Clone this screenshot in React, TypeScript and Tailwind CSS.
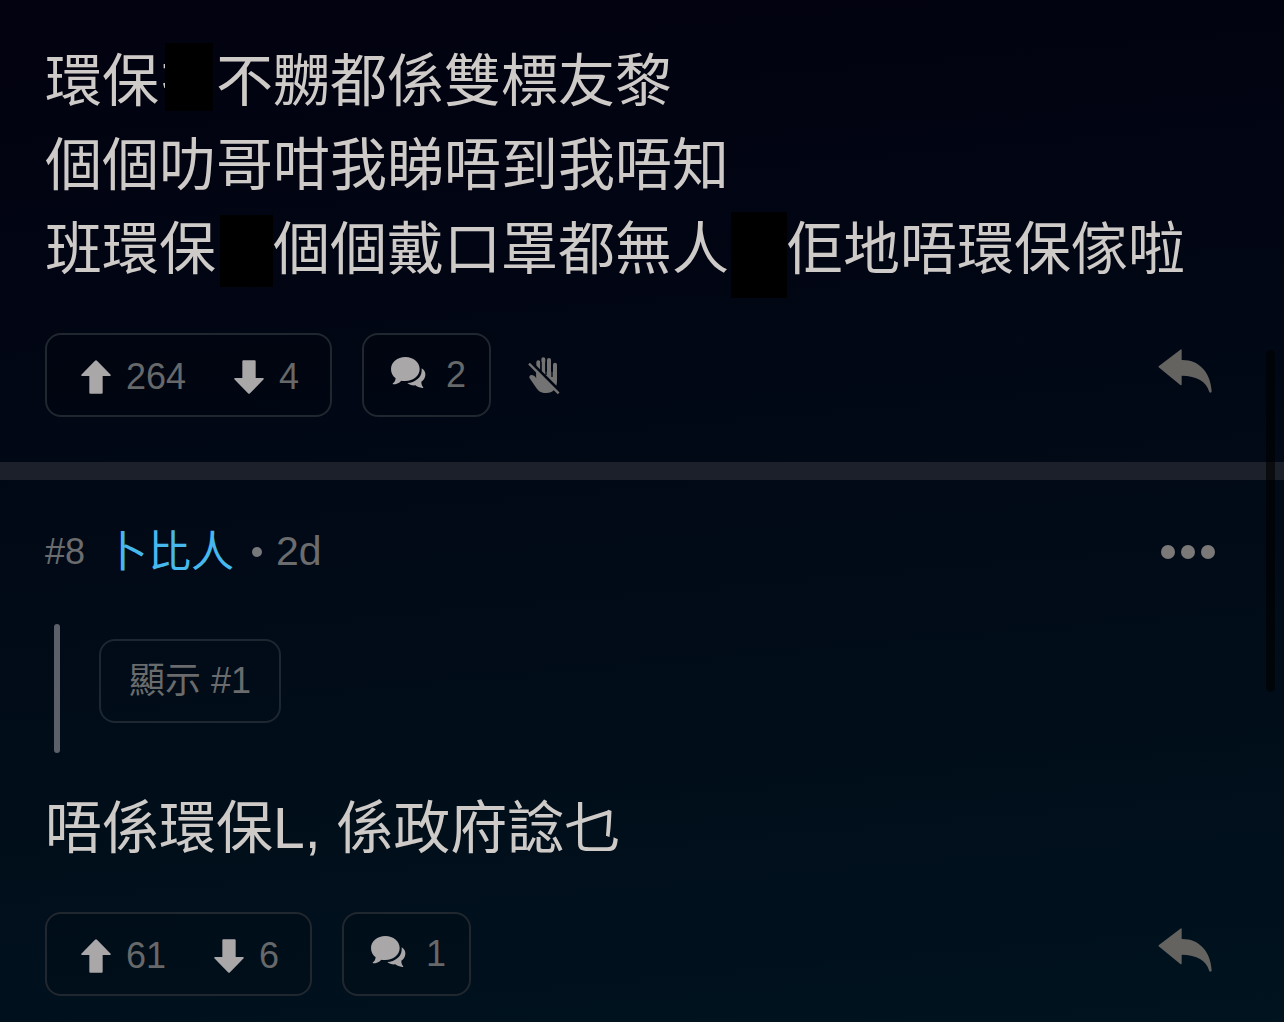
import type { ReactNode } from 'react';

interface PostActionsProps {
  likes: number;
  dislikes: number;
  replies: number;
  muted?: boolean;
}

function ArrowUpIcon() {
  return (
    <svg viewBox="0 0 90 102" className="w-[30px] h-[34px]" fill="#aaa7a9" aria-hidden="true">
      <path d="M42 2Q45-1 48 2L89 44Q91 48 86 48H65V98Q65 101 62 101H28Q25 101 25 98V48H4Q-1 48 1 44Z" />
    </svg>
  );
}

function ArrowDownIcon() {
  return (
    <svg viewBox="0 0 90 102" className="w-[30px] h-[34px]" fill="#aaa7a9" aria-hidden="true">
      <path d="M42 100Q45 103 48 100L89 58Q91 54 86 54H65V4Q65 1 62 1H28Q25 1 25 4V54H4Q-1 54 1 58Z" />
    </svg>
  );
}

function BubblesIcon() {
  return (
    <svg viewBox="0 0 108 114" className="w-9 h-[38px]" fill="#aaa7a9" aria-hidden="true">
      <path d="M46 3C70 3 89 19 89 39S70 75 46 75C41 75 38 75 34 74C27 82 18 85 10 85C8 85 7 83 9 82C14 78 16 74 17 67C8 60 3 50 3 39C3 19 22 3 46 3Z" />
      <path d="M95 37C104 43 107 50 106 58C105 67 101 73 94 77C94 85 96 89 99 93C101 95 99 97 97 96C89 95 81 93 76 88C66 89 58 86 52 81C75 80 94 65 95 45Z" />
    </svg>
  );
}

function HandOffIcon() {
  return (
    <svg viewBox="0 0 99 120" className="w-[33px] h-10" aria-hidden="true">
      <g fill="none" stroke="#747373" strokeWidth="12" strokeLinecap="round">
        <path d="M34 22V66M49 13V66M66 15V66M84 29V70" />
      </g>
      <path
        d="M28 50H90V78C90 100 78 114 58 114C42 114 34 108 28 99L8 70C5 65 9 59 15 60C21 61 24 64 28 70Z"
        fill="#747373"
      />
      <path d="M75 66V26M57 60V20M42 50V20" stroke="#010813" strokeWidth="4" fill="none" />
      <path d="M8 18L99 109" stroke="#010813" strokeWidth="9" />
      <path d="M6 26L95 115" stroke="#747373" strokeWidth="7" />
    </svg>
  );
}

function ReplyIcon() {
  return (
    <svg viewBox="0 0 162 132" className="w-[54px] h-11" fill="#64635f" aria-hidden="true">
      <path d="M2 55Q0 53 3 51L67 2Q71-1 71 4V33C125 32 158 72 161 127Q161 131 157 131Q153 131 153 127C146 99 116 80 71 80V105Q71 111 66 107Z" />
    </svg>
  );
}

function Redacted({ className }: { className: string }) {
  return (
    <span className="relative">
      扌
      <span className={`absolute bg-black ${className}`} />
    </span>
  );
}

function PostBody({ children }: { children: ReactNode }) {
  return <div className="text-[57px] leading-[84px] text-[#cecac7]">{children}</div>;
}

function PostActions({ likes, dislikes, replies, muted }: PostActionsProps) {
  return (
    <div className="mt-[42px] flex items-start gap-[30px] text-4xl text-[#67686a]">
      <div className="h-[84px] flex items-center gap-12 pl-[34px] pr-[31px] pt-[3px] rounded-2xl border-2 border-[#20272f] bg-black/10">
        <button className="flex items-center gap-[15px]" aria-label="正評">
          <ArrowUpIcon />
          {likes}
        </button>
        <button className="flex items-center gap-[15px]" aria-label="負評">
          <ArrowDownIcon />
          {dislikes}
        </button>
      </div>
      <button
        className="h-[84px] flex items-center gap-5 pl-[26px] pr-[23px] rounded-2xl border-2 border-[#20272f] bg-black/10"
        aria-label="回覆數目"
      >
        <BubblesIcon />
        {replies}
      </button>
      {muted && (
        <button className="h-[84px] flex items-center ml-[6px]" aria-label="禁止留言">
          <HandOffIcon />
        </button>
      )}
      <button className="ml-auto mt-4" aria-label="回覆">
        <ReplyIcon />
      </button>
    </div>
  );
}

export default function App() {
  return (
    <main
      lang="zh-HK"
      className="relative min-h-screen bg-linear-175 from-[#020210] via-[#010a16] to-[#00131f] font-['Liberation_Sans','Noto_Sans_CJK_TC',sans-serif]"
    >
      <article className="pl-[45px] pr-[72px] pt-[39px] pb-[45px]">
        <PostBody>
          <p>
            環保
            <Redacted className="left-[6px] -top-[6px] w-12 h-[68px]" />
            不嬲都係雙標友黎
          </p>
          <p>個個叻哥咁我睇唔到我唔知</p>
          <p>
            班環保
            <Redacted className="left-1 -top-[2px] w-[53px] h-[72px]" />
            個個戴口罩都無人
            <Redacted className="left-[2px] -top-[5px] w-14 h-[86px]" />
            佢地唔環保傢啦
          </p>
        </PostBody>
        <PostActions likes={264} dislikes={4} replies={2} muted />
      </article>

      <div className="h-[18px] bg-[#1b202a]" />

      <article className="pl-[45px] pr-[72px] pt-[42px] pb-6">
        <header className="h-[60px] flex items-center text-[#6b6c6e]">
          <span className="text-4xl">#8</span>
          <a href="#user" className="ml-5 text-[43px] text-[#47b8ee]">卜比人</a>
          <span className="ml-[18px] mr-[14px] size-[10px] rounded-full bg-[#77787a]" />
          <time className="text-[41px]">2d</time>
          <button className="ml-auto -mr-[3px] flex gap-[6px]" aria-label="更多">
            <span className="size-[14px] rounded-full bg-[#7a7978]" />
            <span className="size-[14px] rounded-full bg-[#7a7978]" />
            <span className="size-[14px] rounded-full bg-[#7a7978]" />
          </button>
        </header>

        <blockquote className="mt-[42px] ml-[9px] flex items-stretch gap-[39px]">
          <span className="w-[6px] rounded-full bg-[#5b6069]" />
          <button className="my-[15px] mb-[30px] h-[84px] px-7 rounded-2xl border-2 border-[#1c2731] text-4xl text-[#6a6b6c]">
            顯示 #1
          </button>
        </blockquote>

        <div className="mt-[33px]">
          <PostBody>
            <p>唔係環保L, 係政府諗乜</p>
          </PostBody>
        </div>
        <PostActions likes={61} dislikes={6} replies={1} />
      </article>

      {/* scroll thumb */}
      <div className="absolute right-[9px] top-[350px] w-[9px] h-[342px] rounded-full bg-black/60" />
    </main>
  );
}
